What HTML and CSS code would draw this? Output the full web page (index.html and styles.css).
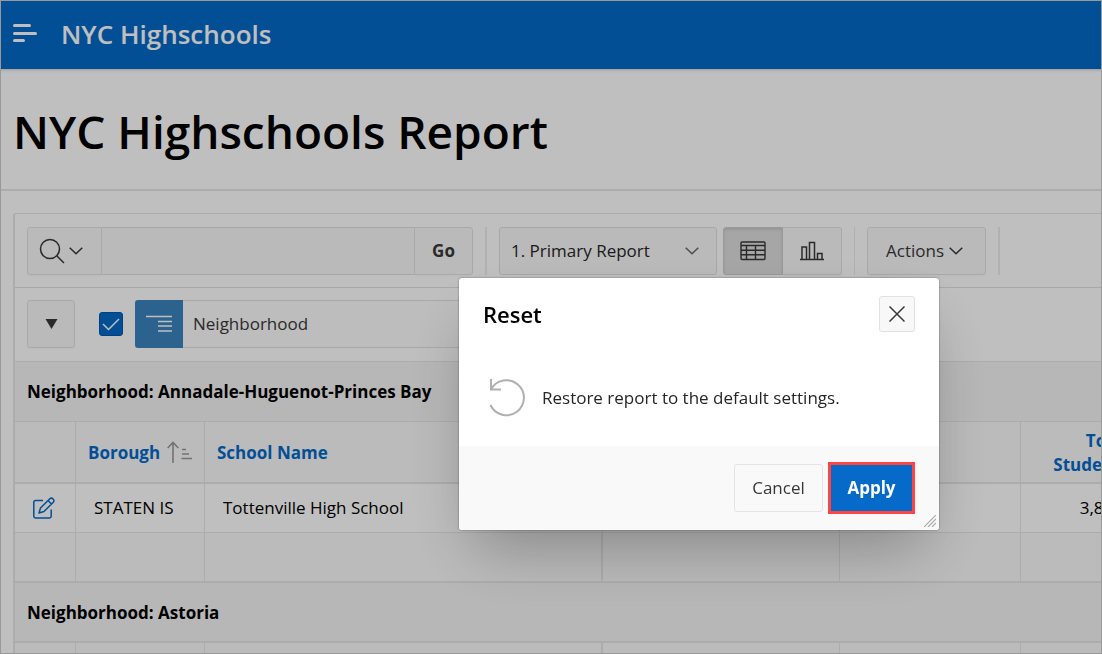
FILE: index.html
```html
<!DOCTYPE html>
<html lang="en">
<head>
<meta charset="utf-8">
<title>NYC Highschools</title>
<link rel="stylesheet" href="styles.css">
</head>
<body>
<div class="app">
  <header class="topbar">
    <button class="menu-btn" aria-label="Main navigation">
      <svg width="24" height="20" viewBox="0 0 24 20" fill="none" stroke="currentColor" stroke-width="3" stroke-linecap="round"><path d="M1.500 1.500h15M1.500 9.500h21M1.500 16.500h9"/></svg>
    </button>
    <span class="app-name">NYC Highschools</span>
  </header>
  <section class="title-bar"><h1>NYC Highschools Report</h1></section>
  <main class="report">
    <div class="toolbar">
      <div class="group search">
        <button class="btn search-btn" aria-label="Select columns to search">
          <svg width="26" height="26" viewBox="0 0 26 26" fill="none" stroke="currentColor" stroke-width="1.5"><circle cx="11" cy="11" r="9.500"/><path d="M18 18l7 7"/></svg>
          <svg width="14" height="8" viewBox="0 0 14 8" fill="none" stroke="currentColor" stroke-width="1.5"><path d="M.7 .7l6.300 6 6.300-6"/></svg>
        </button>
        <input class="search-input" type="text" aria-label="Search report">
        <button class="btn go-btn">Go</button>
      </div>
      <div class="group saved">
        <div class="select-wrap">
          <select class="saved-select" aria-label="Reports"><option>1. Primary Report</option></select>
          <svg class="select-arrow" width="14" height="8" viewBox="0 0 14 8" fill="none" stroke="currentColor" stroke-width="1.5"><path d="M.7 .7l6.300 6 6.300-6"/></svg>
        </div>
        <div class="views">
          <button class="btn view-btn active" aria-label="View report">
            <svg width="26" height="20" viewBox="0 0 26 20" fill="none" stroke="currentColor" stroke-width="1.4"><rect x="1" y="1" width="24" height="17.500" rx="1"/><path d="M1 4.500h24M1 9.200h24M1 13.800h24M6.500 4.500v14M15.500 4.500v14" /></svg>
          </button>
          <button class="btn view-btn" aria-label="View chart">
            <svg width="24" height="20" viewBox="0 0 24 20" fill="none" stroke="currentColor" stroke-width="1.5"><path d="M0 18.500h24M2 18.500V6h4.500v12.500M9.500 18.500V1.500h5v17M17.500 18.500v-6H22v6"/></svg>
          </button>
        </div>
      </div>
      <div class="group">
        <button class="btn actions-btn">Actions
          <svg width="14" height="8" viewBox="0 0 14 8" fill="none" stroke="currentColor" stroke-width="1.5"><path d="M.7 .7l6.300 6 6.300-6"/></svg>
        </button>
      </div>
    </div>
    <div class="filters">
      <button class="btn expand-btn" aria-label="Expand report settings">
        <svg width="13" height="10" viewBox="0 0 13 10" fill="currentColor"><path d="M.5 0h12l-6 10z"/></svg>
      </button>
      <input class="check" type="checkbox" id="break-nbhd" checked>
      <div class="chip">
        <span class="chip-icon"><svg width="26" height="18" viewBox="0 0 26 18" fill="none" stroke="currentColor" stroke-width="1.5"><path d="M0 1.500h26M12 6.500h14M12 11h14M12 16h14"/></svg></span>
        <label class="chip-label" for="break-nbhd">Neighborhood</label>
      </div>
    </div>
    <div class="table-scroll">
      <table class="grid">
        <colgroup><col class="c-edit"><col class="c-borough"><col class="c-school"><col class="c-mid"><col class="c-mid2"><col class="c-total"></colgroup>
        <tbody>
          <tr class="break first"><th colspan="6">Neighborhood: Annadale-Huguenot-Princes Bay</th></tr>
          <tr class="heads">
            <th></th>
            <th><div class="sorted"><a href="#">Borough</a>
              <svg class="sort" width="26" height="24" viewBox="0 0 26 24" fill="none" stroke="currentColor" stroke-width="1.600"><path d="M6 22V2M.7 7L6 1.500 11.300 7M15 8.500h4M15 13h7M14.500 17.500h10.500"/></svg></div></th>
            <th><a href="#">School Name</a></th>
            <th></th><th></th>
            <th class="num"><a href="#">Total Students</a></th>
          </tr>
          <tr>
            <td class="edit"><a href="#" aria-label="Edit"><svg width="22" height="22" viewBox="0 0 22 22" fill="none" stroke="currentColor" stroke-width="1.500" stroke-linejoin="round"><path d="M10 3.500H2.500a1.700 1.700 0 0 0-1.700 1.700v14a1.700 1.700 0 0 0 1.700 1.700h14a1.700 1.700 0 0 0 1.700-1.700V12.500"/><path d="M6 16l1.500-5L16.800 1.700a2.500 2.500 0 0 1 3.500 3.500L11 14.500zM15 3.500l3.500 3.500"/></svg></a></td>
            <td>STATEN IS</td><td>Tottenville High School</td><td></td><td></td><td class="num">3,857</td>
          </tr>
          <tr class="total"><td></td><td></td><td></td><td></td><td></td><td></td></tr>
          <tr class="break"><th colspan="6">Neighborhood: Astoria</th></tr>
          <tr class="heads"><th></th><th></th><th></th><th></th><th></th><th></th></tr>
        </tbody>
      </table>
    </div>
  </main>
</div>
<div class="backdrop"></div>
<div class="dialog" role="dialog" aria-labelledby="dlg-title">
  <div class="dialog-head">
    <h2 id="dlg-title">Reset</h2>
    <button class="close-btn" aria-label="Close">
      <svg width="16" height="16" viewBox="0 0 16 16" fill="none" stroke="currentColor" stroke-width="1.500"><path d="M.5 .5l15 15M15.500 .5l-15 15"/></svg>
    </button>
  </div>
  <div class="dialog-body">
    <svg class="reset-icon" width="36" height="38" viewBox="0 0 36 38" fill="none" stroke="currentColor" stroke-width="2"><path d="M1.500 26A17.500 17.500 0 1 0 2 10.500M2 0v10.500h10"/></svg>
    <p>Restore report to the default settings.</p>
  </div>
  <div class="dialog-foot">
    <button class="cancel-btn">Cancel</button>
    <button class="apply-btn">Apply</button>
  </div>
  <svg class="grip" width="12" height="12" viewBox="0 0 12 12" stroke="currentColor" stroke-width="1.200"><path d="M0 12L12 0M4 12l8-8M8 12l4-4"/></svg>
</div>
</body>
</html>
```
FILE: styles.css
```css
* { box-sizing: border-box; }
body {
  margin: 0;
  height: 100vh;
  overflow: hidden;
  font: 17px/24px "Open Sans", "Noto Sans", sans-serif;
  color: #262626;
  background: #fff;
}
button, input, select { font: inherit; color: inherit; margin: 0; }
a { color: #056ac8; text-decoration: none; }
svg { display: block; flex: none; }
.app { height: 100vh; overflow: hidden; }
.topbar {
  display: flex;
  align-items: center;
  gap: 24px;
  height: 69px;
  padding: 0 13px 2px;
  background: #056ac8;
  color: #fff;
  box-shadow: 0 1px 3px rgba(0, 0, 0, .2);
}
.menu-btn { padding: 0; border: 0; background: none; }
.app-name { font-size: 26px; line-height: 32px; font-weight: 600; }
.title-bar { padding: 30px 13px 26px; border-bottom: 2px solid #e6e6e6; }
h1 { margin: 0; font-size: 46px; line-height: 64px; font-weight: 600; color: #000; }
.report {
  margin: 22px 0 0 13px;
  border: 2px solid #e6e6e6;
  border-width: 1px 0 0 2px;
  border-radius: 3px 0 0 0;
}
.toolbar { display: flex; padding: 13px 12px 12px; border-bottom: 1px solid #e0e0e0; }
.group { display: flex; padding-right: 12px; margin-right: 12px; border-right: 2px solid #ededed; }
.saved { gap: 6px; border-right-width: 1px; }
.btn {
  display: flex;
  align-items: center;
  justify-content: center;
  height: 48px;
  padding: 0;
  border: 1px solid #e2e2e2;
  border-radius: 3px;
  background: #f8f8f8;
  color: #383838;
  box-shadow: 0 2px 2px rgba(0, 0, 0, .02);
}
.search-btn { gap: 4px; width: 75px; padding-right: 8px; border-radius: 3px 0 0 3px; }
.search-input { width: 312px; height: 48px; border: 1px solid #dfdfdf; border-width: 1px 0; background: #f9f9f9; padding: 0 12px; }
.go-btn { width: 59px; font-weight: 700; border-radius: 0 3px 3px 0; }
.select-wrap { display: grid; align-items: center; width: 218px; }
.saved-select {
  grid-area: 1 / 1;
  width: 100%;
  height: 48px;
  padding: 0 11px;
  appearance: none;
  border: 1px solid #dfdfdf;
  border-radius: 3px;
  background: #f9f9f9;
}
.select-arrow { grid-area: 1 / 1; justify-self: end; margin-right: 18px; color: #666; pointer-events: none; }
.views { display: flex; }
.view-btn { width: 59px; border-left: 0; border-radius: 0 3px 3px 0; }
.view-btn.active { width: 60px; border-left: 1px solid #ccc; border-radius: 3px 0 0 3px; background: #dedede; border-color: #ccc; box-shadow: inset 0 2px 3px rgba(0, 0, 0, .1); }
.actions-btn { gap: 5px; width: 119px; padding-right: 4px; }
.filters { display: flex; align-items: center; gap: 24px; padding: 12px 12px 13px; }
.expand-btn { width: 48px; }
.check {
  appearance: none;
  width: 24px;
  height: 24px;
  border: 1px solid #0059ad;
  border-radius: 3px;
  background: #056ac8 url("data:image/svg+xml,%3Csvg xmlns='http://www.w3.org/2000/svg' width='22' height='22' fill='none' stroke='white' stroke-width='1.5'%3E%3Cpath d='M3 11l5.500 5.500L19 6'/%3E%3C/svg%3E") center no-repeat;
}
.chip { display: flex; width: 400px; height: 48px; margin-left: -12px; border: 1px solid #e2e2e2; border-left: 0; border-radius: 3px; background: #fcfcfc; }
.chip-icon { display: grid; place-items: center; width: 48px; height: 48px; margin: -1px 0; background: #3b85be; color: #fff; border-radius: 3px 0 0 3px; }
.chip-label { padding: 11px 10px; color: #383838; }
.table-scroll { overflow: hidden; }
.grid { width: 1127px; table-layout: fixed; border-collapse: separate; border-spacing: 0; }
.c-edit { width: 61px; }
.c-borough { width: 129px; }
.c-school { width: 398px; }
.c-mid { width: 237px; }
.c-mid2 { width: 181px; }
.c-total { width: 121px; }
.grid th, .grid td { text-align: left; }
.break th { height: 60px; padding: 2px 12px 0; border-bottom: 2px solid #e6e6e6; background: #f5f5f5; color: #000; font-weight: 700; }
.break.first th { height: 61px; padding-top: 0; border-top: 1px solid #e6e6e6; border-bottom-width: 1px; }
.heads th { height: 62px; padding: 2px 12px 0; border-right: 1px solid #e6e6e6; border-bottom: 2px solid #e6e6e6; background: #fafafa; font-weight: 700; }
.heads th:nth-child(3), .total td:nth-child(3) { border-right-width: 2px; }
.grid td { height: 49px; padding: 0 18px; border-right: 1px solid #e6e6e6; border-bottom: 1px solid #e6e6e6; color: #000; }
.total td { height: 50px; border-bottom-width: 2px; background: #fafafa; }
.grid .num { text-align: right; }
.grid .num a { display: inline-block; width: min-content; }
.sorted { display: flex; align-items: center; gap: 7px; }
.sort { color: #999; }
.backdrop { position: fixed; inset: 0; background: rgba(0, 0, 0, .25); border: 1px solid #999; }
.dialog {
  position: fixed;
  left: 459px;
  top: 278px;
  width: 480px;
  border-radius: 3px;
  background: #fff;
  box-shadow: 0 30px 60px -15px rgba(0, 0, 0, .3), 0 0 2px rgba(0, 0, 0, .5);
}
.dialog-head { display: flex; justify-content: space-between; align-items: center; padding: 18px 24px; }
h2 { margin: 0; font-size: 22px; line-height: 32px; font-weight: 600; color: #000; }
.close-btn { display: grid; place-items: center; width: 36px; height: 36px; padding: 0; border: 1px solid #e2e2e2; border-radius: 3px; background: #f8f8f8; color: #383838; }
.dialog-body { display: flex; align-items: center; gap: 17px; padding: 29px 24px 29px 30px; }
.dialog-body p { margin: 0; }
.reset-icon { color: #b0b0b0; }
.dialog-foot { display: flex; justify-content: flex-end; align-items: center; gap: 5px; padding: 16px 24px; background: #f9f9f9; border-radius: 0 0 3px 3px; }
.cancel-btn { width: 89px; height: 48px; padding: 0; border: 1px solid #e4e4e4; border-radius: 3px; background: #f9f9f9; color: #383838; }
.apply-btn { width: 87px; height: 52px; padding: 0; border: 3px solid #ff4444; background: #056ac8; color: #fff; font-weight: 700; }
.grip { position: absolute; right: 3px; bottom: 3px; color: #aaa; }
```
